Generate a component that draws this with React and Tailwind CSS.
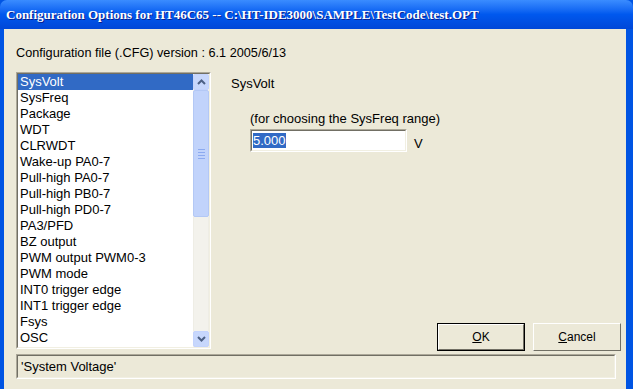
import React from "react";

const items = [
  "SysVolt",
  "SysFreq",
  "Package",
  "WDT",
  "CLRWDT",
  "Wake-up PA0-7",
  "Pull-high PA0-7",
  "Pull-high PB0-7",
  "Pull-high PD0-7",
  "PA3/PFD",
  "BZ output",
  "PWM output PWM0-3",
  "PWM mode",
  "INT0 trigger edge",
  "INT1 trigger edge",
  "Fsys",
  "OSC",
  "Idle mode option",
];

function Chevron({ up }) {
  return (
    <svg width="9" height="6" viewBox="0 0 9 6">
      <path
        d={up ? "M1 5 L4.5 1.5 L8 5" : "M1 1 L4.5 4.5 L8 1"}
        fill="none"
        stroke="#4d6185"
        strokeWidth="2"
      />
    </svg>
  );
}

function ScrollBar() {
  return (
    <div className="flex w-[16px] shrink-0 flex-col bg-[#f3f2ec]">
      <div className="flex h-[16px] items-center justify-center rounded-[2px] border border-[#c3d3fd] bg-[#c7d7fc]">
        <Chevron up />
      </div>
      <div className="flex h-[127px] flex-col items-center justify-center gap-[2px] rounded-[2px] border border-[#b3c8f5] bg-[#c1d3fb]">
        <div className="h-px w-[7px] bg-[#8caaf0]" />
        <div className="h-px w-[7px] bg-[#8caaf0]" />
        <div className="h-px w-[7px] bg-[#8caaf0]" />
        <div className="h-px w-[7px] bg-[#8caaf0]" />
      </div>
      <div className="flex-1 border-x border-[#eeede5]" />
      <div className="flex h-[16px] items-center justify-center rounded-[2px] border border-[#c3d3fd] bg-[#c7d7fc]">
        <Chevron />
      </div>
    </div>
  );
}

function Sunken({ className, children }) {
  return (
    <div className={`border border-t-[#aca899] border-l-[#aca899] border-b-white border-r-white ${className}`}>
      <div className="flex h-full border border-t-[#716f64] border-l-[#716f64] border-b-[#f1efe2] border-r-[#f1efe2]">
        {children}
      </div>
    </div>
  );
}

function Button({ label, def }) {
  return (
    <div
      className={`flex h-[28px] w-[88px] items-center justify-center ${
        def ? "border border-black" : ""
      }`}
    >
      <div className="flex h-full w-full items-center justify-center border border-t-white border-l-white border-b-[#716f64] border-r-[#716f64] bg-[#ece9d8]">
        <span className="text-[12px] text-black">
          <span className="underline">{label[0]}</span>
          {label.slice(1)}
        </span>
      </div>
    </div>
  );
}

export default function App() {
  return (
    <div
      className="flex h-[389px] w-[633px] flex-col overflow-hidden bg-[#0054e3]"
      style={{ fontFamily: '"Liberation Sans", Arial, sans-serif' }}
    >
      <div className="flex h-[29px] shrink-0 items-center rounded-t-[7px] bg-gradient-to-b from-[#3a8cff] via-[#0058ee] to-[#0047d8] pl-[6px]">
        <span
          className="text-[13px] font-bold text-white [text-shadow:1px_1px_0_#0a1e8c]"
          style={{ fontFamily: '"Liberation Serif", "Times New Roman", serif' }}
        >
          Configuration Options for HT46C65 -- C:\HT-IDE3000\SAMPLE\TestCode\test.OPT
        </span>
      </div>

      <div className="flex flex-1 px-[4px] pr-[7px]">
        <div className="flex flex-1 flex-col bg-[#ece9d8] pl-[12px] pr-[5px] text-[12px] text-black">
          <div className="mt-[16px] h-[16px] text-[12.7px] leading-[16px]">
            Configuration file (.CFG) version : 6.1 2005/6/13
          </div>

          <div className="mt-[11px] flex h-[282px]">
            <Sunken className="h-[277px] w-[195px] shrink-0 bg-white">
              <div className="flex-1 overflow-hidden bg-white">
                {items.map((it, i) => (
                  <div
                    key={it}
                    className={`h-[16px] pl-[2px] text-[13px] leading-[16px] ${
                      i === 0 ? "bg-[#316ac5] text-white" : "text-black"
                    }`}
                  >
                    {it}
                  </div>
                ))}
              </div>
              <ScrollBar />
            </Sunken>

            <div className="flex flex-1 flex-col pl-[20px]">
              <div className="mt-[4px] text-[13px] leading-[16px]">SysVolt</div>
              <div className="ml-[19px] mt-[19px] text-[13px] leading-[16px]">
                (for choosing the SysFreq range)
              </div>
              <div className="ml-[19px] mt-[2px] flex items-end gap-[7px]">
                <Sunken className="h-[23px] w-[157px] bg-white">
                  <div className="flex flex-1 items-center bg-white pl-[1px]">
                    <span className="bg-[#316ac5] text-[13px] leading-[15px] text-white">
                      5.000
                    </span>
                  </div>
                </Sunken>
                <span className="text-[13px] leading-[16px]">V</span>
              </div>
              <div className="mt-auto mb-[3px] flex justify-end gap-[8px]">
                <Button label="OK" def />
                <Button label="Cancel" />
              </div>
            </div>
          </div>

          <Sunken className="h-[25px] w-[600px] bg-[#ece9d8]">
            <div className="flex flex-1 items-center pl-[3px] text-[13px]">'System Voltage'</div>
          </Sunken>
        </div>
      </div>
    </div>
  );
}
